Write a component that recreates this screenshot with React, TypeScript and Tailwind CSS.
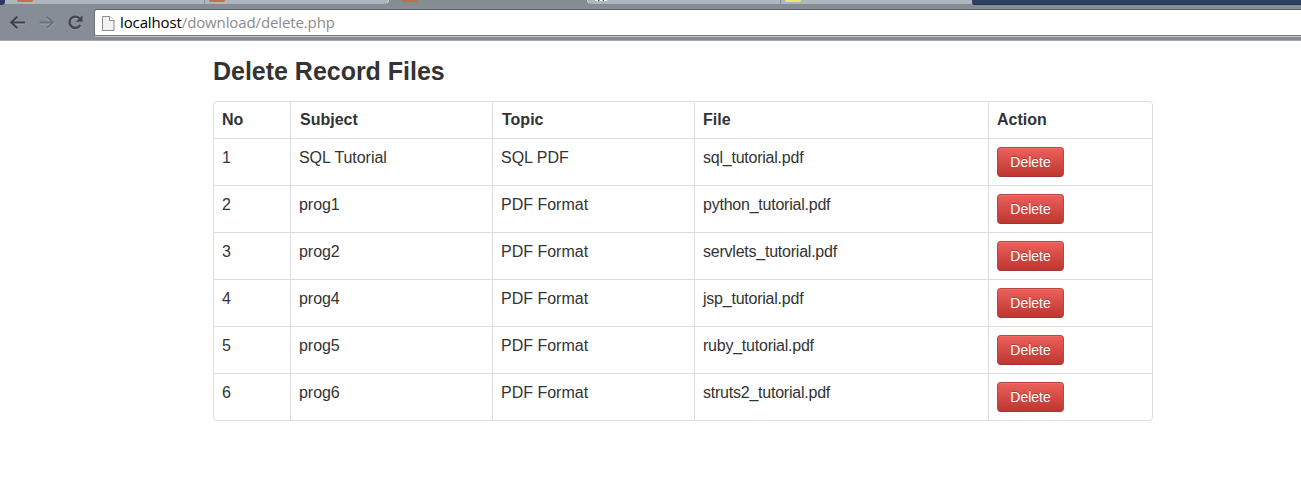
const COLUMNS = ["No", "Subject", "Topic", "File", "Action"];

const RECORDS = [
  { no: 1, subject: "SQL Tutorial", topic: "SQL PDF", file: "sql_tutorial.pdf" },
  { no: 2, subject: "prog1", topic: "PDF Format", file: "python_tutorial.pdf" },
  { no: 3, subject: "prog2", topic: "PDF Format", file: "servlets_tutorial.pdf" },
  { no: 4, subject: "prog4", topic: "PDF Format", file: "jsp_tutorial.pdf" },
  { no: 5, subject: "prog5", topic: "PDF Format", file: "ruby_tutorial.pdf" },
  { no: 6, subject: "prog6", topic: "PDF Format", file: "struts2_tutorial.pdf" },
];

const ROW = "grid grid-cols-[76px_202px_202px_294px_164px]";

function TabStrip() {
  return (
    <div className="flex h-[5px] overflow-hidden bg-[#868d94]">
      <div className="h-[5px] w-[5px] rounded-br-[4px] bg-[#2b3763]" />
      <div className="flex h-[5px] w-[199px] border-b border-[#858b91] bg-[#aeb6be] pl-3">
        <span className="h-[2px] w-4 rounded-b-[2px] bg-[#c4704e]" />
      </div>
      <div className="flex h-[5px] w-[185px] rounded-br-[5px] border-r border-b border-l border-r-[#dadddf] border-b-[#858b91] border-l-[#888f96] bg-[#aeb6be] pl-1">
        <span className="h-[2px] w-4 rounded-b-[2px] bg-[#c4704e]" />
      </div>
      <div className="flex h-[5px] w-[198px] bg-[#868d92] pl-3">
        <span className="h-[2px] w-4 bg-[#b96f4e]" />
      </div>
      <div className="flex h-[5px] w-[193px] rounded-bl-[5px] border-b border-l border-b-[#858b91] border-l-[#dadddf] bg-[#aeb6be] pl-[7px]">
        <span className="h-px w-3 border-t border-dashed border-white bg-[#555269]" />
      </div>
      <div className="flex h-[5px] w-[192px] border-b border-l border-b-[#858b91] border-l-[#858b91] bg-[#aeb6be] pl-1">
        <span className="h-[2px] w-4 rounded-b-[2px] bg-[#e5ec63]" />
      </div>
      <div className="h-[5px] flex-1 rounded-bl-[3px] border-b border-[#22304a] bg-[#2d3f5f]" />
    </div>
  );
}

function Toolbar() {
  return (
    <div className="flex h-9 items-start border-b border-[#a4a9b0] bg-[#868d96] pt-1">
      <svg className="h-[27px] w-[94px] shrink-0" viewBox="0 0 94 27" fill="none">
        <g stroke="#a4aab1" strokeWidth="2" transform="translate(0 1)">
          <path d="M25 13.5H11M17.3 7.8L11.3 13.5L17.3 19.2" />
          <path d="M80.3 16A5.7 5.7 0 1 1 79.5 9.5" />
        </g>
        <path d="M25 13.5H11M17.3 7.8L11.3 13.5L17.3 19.2" stroke="#3f4348" strokeWidth="2.2" />
        <path d="M39.5 14.5H53M47 9L53 14.5L47 20" stroke="#a0a7ae" strokeWidth="2" />
        <path d="M39.5 13.5H53M47 7.8L53 13.5L47 19.2" stroke="#6b7178" strokeWidth="1.8" />
        <path d="M80.3 16A5.7 5.7 0 1 1 79.5 9.5" stroke="#44484d" strokeWidth="2.4" />
        <path d="M82.5 6.2V12.8H75.8Z" fill="#44484d" />
      </svg>
      <div className="flex h-7 flex-1 items-start rounded-l-[3px] border-y border-l border-t-[#5d6166] border-b-[#c0c4ca] border-l-[#6d737a] bg-white">
        <div className="flex h-[26px] flex-1 items-center rounded-bl-[2px] border-b border-[#72777e] pl-[7px]">
          <svg className="h-4 w-[13px] shrink-0" viewBox="0 0 13 16">
            <path d="M.5 1.5H8L12 5.5V15.5H.5Z" fill="#f2f2f2" stroke="#8d8d8d" />
            <path d="M7.5 1.5V5.5H12" fill="#fff" stroke="#8d8d8d" />
          </svg>
          <div className="ml-[5px] font-['Open_Sans',sans-serif] text-[15px] leading-[25px] tracking-[-0.12px] whitespace-nowrap text-[#8b8b8b]">
            <span className="text-black">localhost</span>/download/delete.php
          </div>
        </div>
      </div>
    </div>
  );
}

function DeleteButton() {
  return (
    <button
      type="button"
      className="block h-[30px] w-[67px] rounded-[4px] border border-[#b54640] border-b-[#a33530] bg-linear-to-b from-[#ee5f5b] to-[#bd362f] text-center text-[14px] leading-[28px] text-white shadow-[inset_0_1px_0_rgba(255,255,255,.1)] text-shadow-[0_-1px_0_rgba(0,0,0,.25)]"
    >
      Delete
    </button>
  );
}

export default function App() {
  return (
    <div className="h-[477px] overflow-hidden bg-white font-['Liberation_Sans',Arial,sans-serif] text-[#333333]">
      <TabStrip />
      <Toolbar />
      <main className="ml-[213px] w-[940px] pt-[10px]">
        <h1 className="h-[50px] text-[25px] leading-[41px] font-bold tracking-[-0.02px] whitespace-nowrap">
          <span>Delete Record Files</span>
        </h1>
        <div className="rounded-[4px] border border-[#dddddd] text-[16px] leading-5">
          <div className={ROW + " h-9 font-bold"}>
            {COLUMNS.map((c, i) => (
              <div key={c} className={i === 0 ? "px-2 pt-2" : "border-l border-[#dddddd] px-2 pt-2"}>
                <span className={c === "Subject" || c === "Topic" ? "pl-px" : ""}>{c}</span>
              </div>
            ))}
          </div>
          {RECORDS.map((r) => (
            <div key={r.no} className={ROW + " h-[47px] border-t border-[#dddddd]"}>
              <div className="px-2 pt-[9px]"><span>{r.no}</span></div>
              <div className="border-l border-[#dddddd] px-2 pt-[9px] tracking-[-0.05px]"><span>{r.subject}</span></div>
              <div className="border-l border-[#dddddd] px-2 pt-[9px]"><span>{r.topic}</span></div>
              <div className="border-l border-[#dddddd] px-2 pt-[9px] tracking-[-0.23px]"><span>{r.file}</span></div>
              <div className="border-l border-[#dddddd] px-2 pt-2"><DeleteButton /></div>
            </div>
          ))}
        </div>
      </main>
    </div>
  );
}
